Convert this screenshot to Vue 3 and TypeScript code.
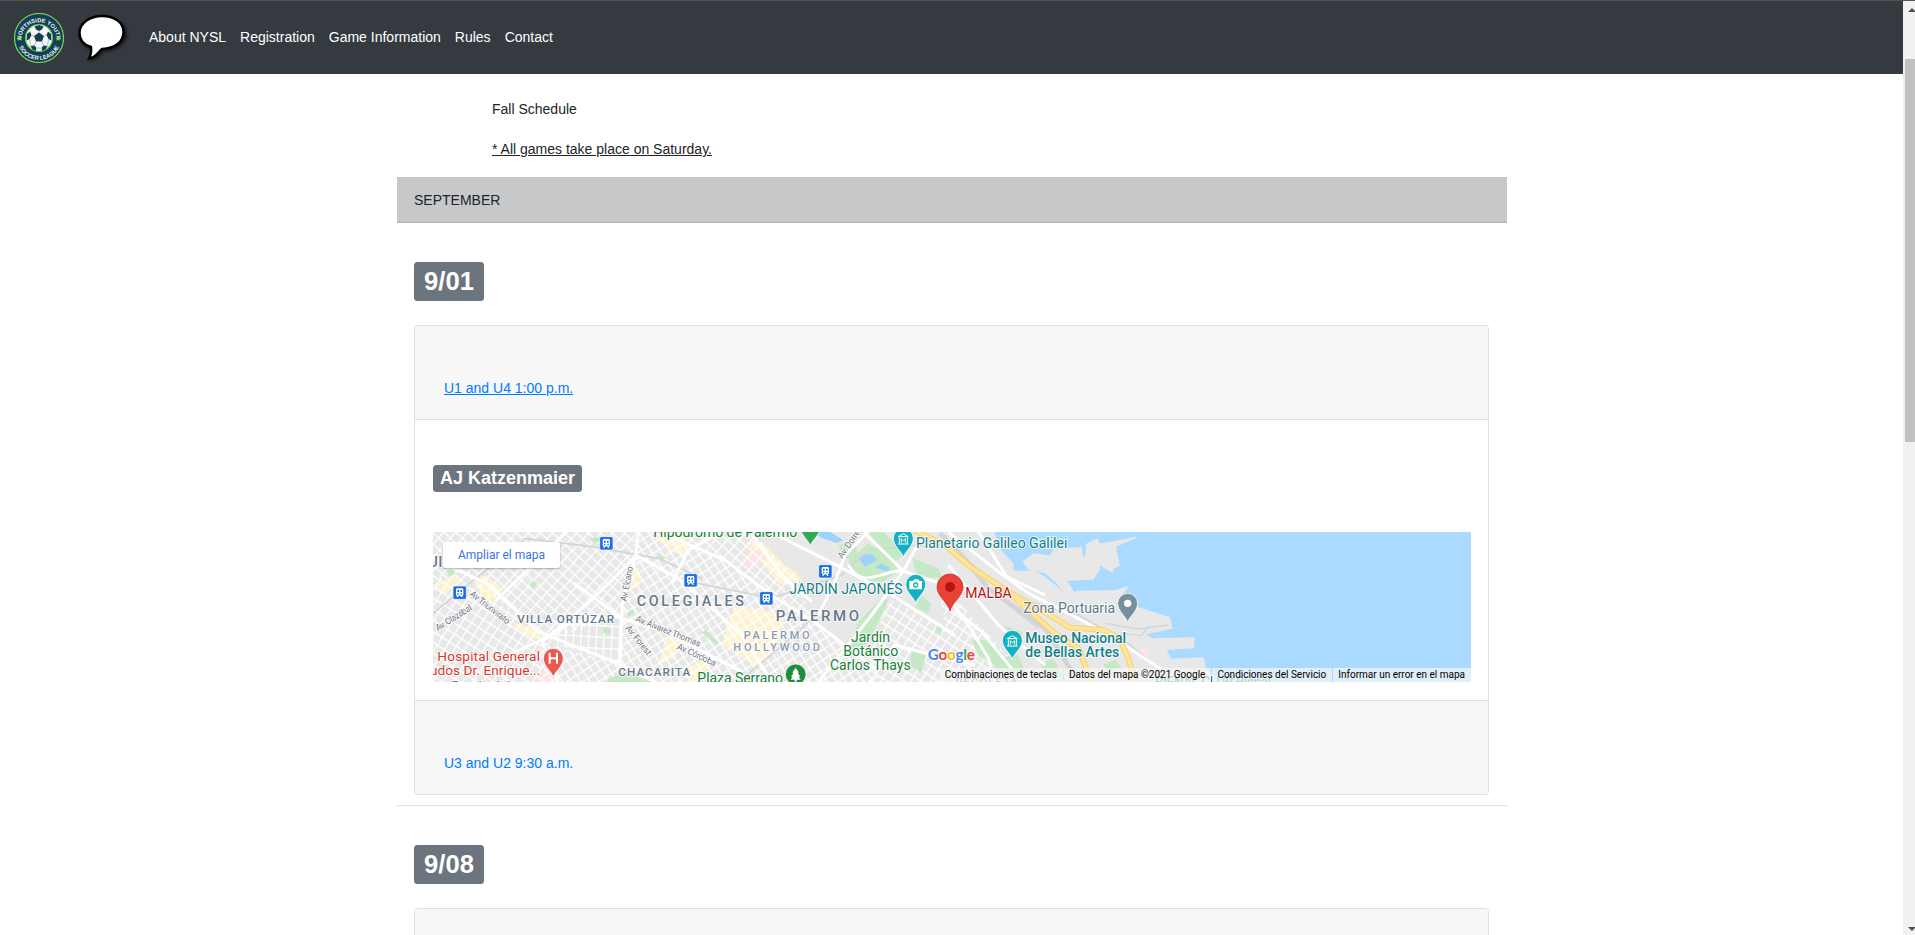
<script setup lang="ts">
interface Label {
  text: string
  x: number
  y: number
  size: number
  color: string
  width: number
  weight?: number
  rotate?: number
}
interface Pin {
  x: number
  y: number
  color: string
  kind: 'hospital' | 'plain' | 'museum' | 'camera' | 'dot' | 'main'
}

const navLinks: string[] = ['About NYSL', 'Registration', 'Game Information', 'Rules', 'Contact']
const attribution: string[] = [
  'Combinaciones de teclas',
  'Datos del mapa ©2021 Google',
  'Condiciones del Servicio',
  'Informar un error en el mapa',
]

const slate = '#66788a'
const street = '#6c7681'
const green = '#188038'
const teal = '#0f8089'
const red = '#d93a31'

// Map drawing units are thirds of a CSS pixel.
const labels: Label[] = [
  { text: 'UI', x: 10, y: 125, size: 44, color: slate, width: 42, weight: 500 },
  { text: 'Hipódromo de Palermo', x: 685, y: 35, size: 42, color: green, width: 432 },
  { text: 'Av Triunvirato', x: 133, y: 210, size: 27, color: street, width: 144, rotate: 38 },
  { text: 'Av. Olazábal', x: 38, y: 319, size: 27, color: street, width: 124, rotate: -32 },
  { text: 'Av. Elcano', x: 604, y: 230, size: 27, color: street, width: 106, rotate: -79 },
  { text: 'Av. Álvarez Thomas', x: 630, y: 288, size: 27, color: street, width: 208, rotate: 22 },
  { text: 'Av. Forest', x: 600, y: 310, size: 27, color: street, width: 106, rotate: 51 },
  { text: 'Av. Córdoba', x: 754, y: 371, size: 27, color: street, width: 126, rotate: 25 },
  { text: 'Av. Dorrego', x: 1252, y: 102, size: 27, color: street, width: 124, rotate: -56 },
  { text: 'Facultad de', x: 80, y: 491, size: 34, color: street, width: 195, weight: 500 },
  { text: 'VILLA ORTÚZAR', x: 277, y: 294, size: 35, color: slate, width: 290, weight: 500 },
  { text: 'COLEGIALES', x: 635, y: 243, size: 43, color: slate, width: 322, weight: 500 },
  { text: 'CHACARITA', x: 580, y: 453, size: 35, color: slate, width: 216, weight: 500 },
  { text: 'PALERMO', x: 1052, y: 288, size: 45, color: slate, width: 250, weight: 500 },
  { text: 'PALERMO', x: 956, y: 342, size: 33, color: '#8a9ab3', width: 198, weight: 500 },
  { text: 'HOLLYWOOD', x: 925, y: 378, size: 33, color: '#8a9ab3', width: 260, weight: 500 },
  { text: 'Hospital General', x: 37, y: 408, size: 41, color: red, width: 308 },
  { text: 'udos Dr. Enrique...', x: 15, y: 450, size: 41, color: red, width: 331 },
  { text: 'JARDÍN JAPONÉS', x: 1093, y: 206, size: 42, color: teal, width: 340 },
  { text: 'Jardín', x: 1278, y: 350, size: 42, color: green, width: 117 },
  { text: 'Botánico', x: 1255, y: 392, size: 42, color: green, width: 165 },
  { text: 'Carlos Thays', x: 1215, y: 434, size: 42, color: green, width: 242 },
  { text: 'Plaza Serrano', x: 817, y: 475, size: 42, color: green, width: 257 },
  { text: 'Planetario Galileo Galilei', x: 1473, y: 69, size: 42, color: teal, width: 454 },
  { text: 'MALBA', x: 1621, y: 219, size: 42, color: '#b31412', width: 139 },
  { text: 'Zona Portuaria', x: 1795, y: 264, size: 42, color: '#5d7988', width: 275 },
  { text: 'Museo Nacional', x: 1801, y: 354, size: 42, color: teal, width: 302, weight: 500 },
  { text: 'de Bellas Artes', x: 1801, y: 396, size: 42, color: teal, width: 282, weight: 500 },
  { text: 'RECOLETA', x: 1591, y: 483, size: 35, color: slate, width: 188, weight: 500 },
  { text: 'BIENAL CLUB Bienal', x: 2190, y: 487, size: 42, color: teal, width: 348, weight: 500 },
]

const stations: [number, number][] = [[104, 203], [544, 55], [797, 166], [1201, 139], [1024, 220]]

const pins: Pin[] = [
  { x: 385, y: 457, color: '#e8594f', kind: 'hospital' },
  { x: 1156, y: 63, color: '#34a853', kind: 'plain' },
  { x: 1435, y: 97, color: '#12b1c4', kind: 'museum' },
  { x: 1762, y: 403, color: '#12b1c4', kind: 'museum' },
  { x: 1472, y: 235, color: '#12b1c4', kind: 'camera' },
  { x: 2108, y: 292, color: '#78909c', kind: 'dot' },
  { x: 1575, y: 258, color: '#ea4335', kind: 'main' },
]

const parks: string[] = [
  '65,135 85,132 90,148 72,153', '313,180 325,166 337,178 325,190', '535,308 556,308 556,325 535,325',
  '605,265 622,253 628,262 610,278', '695,93 705,86 722,98 712,106', '550,462 600,440 680,471 545,471', '495,40 520,35 523,48 508,55',
  '830,322 842,315 880,352 872,359', '1240,62 1290,40 1300,110 1260,100',
  '1270,110 1330,55 1395,100 1420,138 1375,170 1310,165', '1330,21 1375,21 1440,85 1412,110 1370,75',
  '1375,215 1390,228 1350,310 1320,360 1275,370 1300,290',
  '1462,100 1540,130 1555,160 1510,160 1475,150', '1490,210 1518,238 1510,262 1470,250',
  '1460,370 1505,380 1490,445 1455,420', '1535,300 1550,306 1548,330 1532,322',
  '1640,345 1695,345 1740,395 1720,425 1660,390', '1700,400 1780,390 1800,440 1720,450',
  '1845,415 1885,402 1920,460 1865,455', '2035,418 2070,405 2090,430 2050,440', '1735,300 1792,322 1790,340 1745,325',
]
const blocks: string[] = [
  '150,180 180,150 232,190 195,240', '25,180 95,150 110,170 60,210', '600,160 640,125 650,170 595,215',
  '690,40 760,21 795,60 770,95', '725,335 780,345 745,400 700,420', '930,240 1080,270 1060,350 1000,430 890,360',
  '965,55 1010,50 1100,120 1130,165 1065,180', '770,440 840,400 855,430 800,471', '255,290 345,315 350,345 300,330',
]
const roads: string[] = [
  'M640 20L632 95L592 235L584 440', 'M632 95L500 225L350 352', 'M20 100L185 175L340 320L590 420L700 475',
  'M445 172L590 280L720 320L950 440', 'M350 345L400 471', 'M250 390L350 345L440 290L590 275', 'M635 92L760 160L950 330L1040 471',
  'M700 20L900 105L1045 215L1160 285L1350 430', 'M1035 20L1225 115L1400 210L1590 330', 'M975 20L1070 150L1160 230',
  'M1315 20L1435 138L1560 180', 'M1500 20L1435 138L1340 270L1230 410L1180 471', 'M1560 205L1630 300L1690 400L1710 471',
  'M1590 255L1670 320L1760 430', 'M1180 270L1230 170L1260 90L1330 20', 'M1270 120C1310 200 1380 130 1435 138',
  'M1570 120L1720 300L1860 420', 'M1570 22L1720 140L1810 205L1950 275L2060 335L2220 440', 'M1660 20L1745 155L1860 210',
  'M1350 430L1410 360L1520 390L1650 420', 'M890 20L790 75L740 175', 'M425 20L210 230',
]
</script>

<template>
  <div class="viewport">
    <div class="page">
      <header class="navbar">
        <svg class="logo" viewBox="0 0 100 100">
          <defs>
            <path id="arc-top" d="M14.500 54A35.500 35.500 0 1 1 85.500 54" />
            <path id="arc-bottom" d="M6 50A44 44 0 0 0 94 50" />
          </defs>
          <circle cx="50" cy="50" r="49" fill="#153f58" stroke="#78d64b" stroke-width="2.400" />
          <text class="crest"><textPath href="#arc-top" startOffset="50%" text-anchor="middle">NORTHSIDE YOUTH</textPath></text>
          <text class="crest"><textPath href="#arc-bottom" startOffset="50%" text-anchor="middle">SOCCER LEAGUE</textPath></text>
          <path fill="#8be33f" d="M12 45l1.500 4 4 .2-3.200 2.500 1.200 4-3.500-2.300-3.500 2.300 1.200-4-3.200-2.500 4-.2zM88 45l1.500 4 4 .2-3.200 2.500 1.200 4-3.500-2.300-3.500 2.300 1.200-4-3.200-2.500 4-.2z" />
          <circle cx="50" cy="50" r="27" fill="#f4f7f8" stroke="#67c94a" stroke-width="2.400" />
          <path fill="#183c50" d="M50 39l10 7-4 11H44l-4-11zM50 24l9 3-3 6-6 3-6-3-3-6zM26 42l6-5 3 7-4 8-6 3zM74 42l-6-5-3 7 4 8 6 3zM33 66l8-1 4 5-2 6-6-3zM67 66l-8-1-4 5 2 6 6-3z" />
          <path stroke="#8a9da8" stroke-width="1.300" fill="none" d="M50 36v3M35 44l5 2M65 44l-5 2M44 57l-3 8M56 57l3 8M45 70h10M31 52l2 14M69 52l-2 14" />
        </svg>
        <svg class="bubble" viewBox="0 0 54 54">
          <path class="bubble-shadow" d="M27 5.500C40 5.500 49 13 49 22C49 32 40 38.500 27 39C23 42 21 48 13 48C15 44 15 41 15 37C8 35 4 30 4 23C4 13 14 6 27 5.500Z" />
          <path fill="#fff" stroke="#000" stroke-width="2.400" d="M26 5C39 5 47.500 12 47.500 21C47.500 31 39 37.500 26 38C22 41 20 47 13 47.500C15 44 15.500 40 15 36C8 34 3.500 29 3.500 22C3.500 12 14 5 26 5Z" />
        </svg>
        <nav class="links">
          <a v-for="link in navLinks" :key="link">{{ link }}</a>
        </nav>
      </header>

      <main class="container">
        <div class="intro">
          <p>Fall Schedule</p>
          <p><u>* All games take place on Saturday.</u></p>
        </div>
        <div class="month">SEPTEMBER</div>

        <section class="day">
          <h2><span class="badge date">9/01</span></h2>
          <div class="card">
            <div class="card-header"><a class="game hovered">U1 and U4 1:00 p.m.</a></div>
            <div class="card-body">
              <h4><span class="badge venue">AJ Katzenmaier</span></h4>
              <div class="map">
                <svg class="map-art" viewBox="24 21 3114 450">
                  <defs>
                    <pattern id="grid-a" width="27" height="24" patternUnits="userSpaceOnUse" patternTransform="rotate(42)">
                      <path d="M0 0H27M0 0V24" class="lane" />
                    </pattern>
                    <pattern id="grid-b" width="23" height="34" patternUnits="userSpaceOnUse" patternTransform="rotate(3)">
                      <path d="M0 0H23M0 0V34" class="lane" />
                    </pattern>
                    <pattern id="grid-c" width="26" height="23" patternUnits="userSpaceOnUse" patternTransform="rotate(57)">
                      <path d="M0 0H26M0 0V23" class="lane" />
                    </pattern>
                    <pattern id="grid-d" width="25" height="28" patternUnits="userSpaceOnUse" patternTransform="rotate(33)">
                      <path d="M0 0H25M0 0V28" class="lane" />
                    </pattern>
                  </defs>
                  <rect x="24" y="21" width="3114" height="450" fill="#aadaff" />
                  <g fill="#e8e8e8" transform="translate(1695 15)">
                    <path d="M-1700 0H10L35 62L70 100L72 122L135 122L160 137L205 172L226 195L262 182L375 180L418 168L388 205L380 225L440 230L540 262L548 296L470 312L486 325L615 322L612 355L530 360L544 386L640 382L650 420L700 460H-1700Z" />
                    <path d="M97 95L130 70L180 76L190 58L276 50L279 80L326 74L330 118L310 149L232 152L252 185L226 196L200 160L165 130L115 120Z" />
                    <path d="M287 42L322 25L330 41L438 20L440 23L378 50L390 108L371 116L368 128L287 83Z" />
                  </g>
                  <polygon v-for="b in blocks" :key="b" :points="b" fill="#fef3cf" />
                  <path fill="#fce4e3" d="M950 105l35-35 40 22-40 45zM345 445l40-25 10 51h-60zM1510 335l18-2 2 20-16 4zM2130 378l30-12 12 28-30 10z" />
                  <path fill="url(#grid-a)" d="M24 21H632L590 270L350 350L190 200L24 150Z" />
                  <path fill="url(#grid-d)" d="M24 150L190 200L350 350V471H24Z" />
                  <path fill="url(#grid-b)" d="M350 350L440 280L585 270V420L400 360Z" />
                  <path fill="url(#grid-c)" d="M632 21H700L900 105L1180 290L1350 430L1370 471H350V350L590 420V270Z" />
                  <path fill="url(#grid-a)" d="M700 21H1000L1100 120L1160 280L900 105Z" />
                  <path fill="url(#grid-d)" d="M1390 220L1590 320L1720 430V471H1330V400ZM1540 180L1610 240L1800 450L1720 471L1560 300Z" />
                  <polygon v-for="p in parks" :key="p" :points="p" fill="#c5e8c5" />
                  <path fill="#e8e8e8" d="M980 21h45l170 90-30 65-85-55z" />
                  <path fill="#9cd2fb" d="M1300 100q20-18 45-10l10 15q-25 15-35 20zM1352 128l14-12 28 12-5 12zM1165 21h50l40 25-20 8-45-15z" />
                  <g fill="none" stroke="#d2d5d8" stroke-width="5">
                    <path d="M24 265L300 40L500 65L700 100L830 160M795 170L1040 220L1250 150L1330 75L1480 60L1590 75L1700 200L1840 310M940 471L1110 330L1190 250M1560 40L1740 210L1960 270L2110 355L2200 430" />
                    <path stroke-width="14" d="M1545 25L1600 80L1690 190L1860 310L1960 470" />
                    <path stroke-width="4" d="M2040 295L2140 312L2230 300M2085 325L2150 332L2170 305" />
                  </g>
                  <path v-for="r in roads" :key="r" :d="r" class="road" />
                  <g class="highway-edge">
                    <path d="M1465 15L1560 60L1635 125L1735 190L1810 255L1890 325L1960 370L2000 471" />
                    <path d="M1740 195L1840 250L1935 308L2035 315L2085 340L2110 400L2130 471" />
                  </g>
                  <g class="highway">
                    <path d="M1465 15L1560 60L1635 125L1735 190L1810 255L1890 325L1960 370L2000 471" />
                    <path d="M1740 195L1840 250L1935 308L2035 315L2085 340L2110 400L2130 471" />
                  </g>

                  <text
                    v-for="l in labels"
                    :key="l.text + l.y"
                    :x="l.x"
                    :y="l.y"
                    :fill="l.color"
                    :font-size="l.size"
                    :font-weight="l.weight ?? 400"
                    :textLength="l.width"
                    :transform="l.rotate ? `rotate(${l.rotate} ${l.x} ${l.y})` : undefined"
                    class="label"
                  >{{ l.text }}</text>

                  <g v-for="s in stations" :key="s[0]" :transform="`translate(${s[0]} ${s[1]})`">
                    <rect x="-20" y="-20" width="40" height="40" rx="5" fill="#1a6fe0" stroke="#fff" stroke-width="2" />
                    <path fill="#fff" fill-rule="evenodd" d="M-11-9q0-4 4-4H7q4 0 4 4V6q0 3-4 3l3 4H5L2 9h-4l-3 4h-5l3-4q-4 0-4-3zM-7-8v6h5v-6zM2-8v6h5v-6zM-7 2v4h4V2zM3 2v4h4V2z" />
                  </g>

                  <g transform="translate(1112 448)">
                    <circle r="31" fill="#1e8e3e" stroke="#fff" stroke-width="2" />
                    <path fill="#fff" d="M0-20L10-5H6L14 7H9L15 16H3v6h-6v-6h-12l6-9h-5l8-12h-4z" />
                  </g>

                  <g v-for="p in pins" :key="`${p.x}-${p.y}`" :transform="`translate(${p.x} ${p.y})`">
                    <template v-if="p.kind === 'main'">
                      <path :fill="p.color" stroke="#c5221f" stroke-width="2" d="M0 0C-5-24-39-45-39-72A39 39 0 0 1 39-72C39-45 5-24 0 0Z" />
                      <circle cy="-72" r="15" fill="#b31412" />
                    </template>
                    <template v-else>
                      <path :fill="p.color" stroke="#fff" stroke-width="2.500" d="M0 0C-5-18-30-33-30-57A30 30 0 0 1 30-57C30-33 5-18 0 0Z" />
                      <path v-if="p.kind === 'hospital'" class="glyph-line" stroke-width="6" d="M-11-74v33M11-74v33M-11-57h22" />
                      <circle v-if="p.kind === 'dot'" cy="-57" r="11" fill="#fff" />
                      <g v-if="p.kind === 'museum'" class="glyph-line" stroke-width="3">
                        <path d="M-15-62L0-71L15-62ZM-12-60v19M12-60v19M-16-40h32M-6-44v-12l6 6 6-6v12" />
                      </g>
                      <g v-if="p.kind === 'camera'">
                        <path fill="#fff" d="M-19-67h11l4-5H8l4 5h7v25h-38z" />
                        <circle cy="-55" r="8" :fill="p.color" />
                        <circle cy="-55" r="4" fill="#fff" />
                      </g>
                    </template>
                  </g>

                  <text x="1508" y="406" font-size="46" textLength="142" class="label brand">
                    <tspan fill="#4285f4">G</tspan><tspan fill="#ea4335">o</tspan><tspan fill="#fbbc04">o</tspan><tspan fill="#4285f4">g</tspan><tspan fill="#34a853">l</tspan><tspan fill="#ea4335">e</tspan>
                  </text>
                </svg>
                <a class="enlarge">Ampliar el mapa</a>
                <div class="attribution">
                  <span v-for="a in attribution" :key="a">{{ a }}</span>
                </div>
              </div>
            </div>
            <div class="card-header last"><a class="game">U3 and U2 9:30 a.m.</a></div>
          </div>
        </section>

        <section class="day">
          <h2><span class="badge date">9/08</span></h2>
          <div class="card">
            <div class="card-header"></div>
          </div>
        </section>
      </main>
    </div>
    <div class="scrollbar">
      <i class="arrow up"></i>
      <i class="thumb"></i>
      <i class="arrow down"></i>
    </div>
  </div>
</template>

<style>
html,
body {
  overflow: hidden;
}
</style>

<style scoped>
* {
  box-sizing: border-box;
}
.viewport {
  display: flex;
  height: 935px;
  overflow: hidden;
  background: #fff;
  border-top: 1px solid #54544f;
  color: #212529;
  font: 14px/21px "Liberation Sans", Arial, sans-serif;
}
.page {
  flex: 1;
  min-width: 0;
}
.navbar {
  display: flex;
  align-items: center;
  height: 73px;
  padding-left: 14px;
  background: #343a40;
}
.logo {
  width: 50px;
  height: 50px;
}
.crest {
  fill: #eef4f6;
  font: bold 11.5px "Liberation Sans", Arial, sans-serif;
}
.bubble {
  width: 54px;
  height: 54px;
  margin: 0 0 0 12px;
  overflow: visible;
}
.bubble-shadow {
  fill: #000;
  stroke: #000;
  stroke-width: 2;
  opacity: 0.55;
  filter: blur(1.5px);
  transform: translate(1px, 1px);
}
.links {
  display: flex;
  gap: 14px;
  margin-left: 19px;
  color: #fff;
}
.container {
  margin: 0 396px 0 397px;
}
.intro {
  padding: 25px 0 0 95px;
}
.intro p {
  margin: 0 0 19px;
}
.intro p:last-child {
  margin-bottom: 17px;
}
.month {
  height: 46px;
  padding: 13px 17px 0;
  background: #c6c8ca;
  border-bottom: 1px solid #abadaf;
}
.day {
  padding: 39px 18px 10px 17px;
  border-bottom: 1px solid #dee2e6;
}
h2,
h4 {
  display: flex;
  margin: 0;
}
.badge {
  border-radius: 3.500px;
  background: #6c757d;
  color: #fff;
  font-weight: 700;
}
.date {
  width: 70px;
  height: 39px;
  margin-bottom: 24px;
  font-size: 25.6px;
  line-height: 39px;
  text-align: center;
}
.card {
  border: 1px solid #dfdfdf;
  border-radius: 3.500px;
  overflow: hidden;
}
.card-header {
  height: 94px;
  padding: 52px 29px 0;
  background: #f7f7f7;
  border-bottom: 1px solid #dfdfdf;
}
.card-header.last {
  border-top: 1px solid #dfdfdf;
  border-bottom: 0;
}
.game {
  color: #007bff;
}
.hovered {
  text-decoration: underline;
}
.card-body {
  height: 280px;
  padding: 45px 17px 0 18px;
}
.venue {
  height: 27px;
  margin-bottom: 40px;
  padding: 0 7px;
  font-size: 18px;
  line-height: 26px;
}
.map {
  position: relative;
  height: 150px;
  overflow: hidden;
  font-family: Roboto, "Liberation Sans", sans-serif;
}
.map-art {
  display: block;
  width: 100%;
  height: 150px;
}
.lane {
  fill: none;
  stroke: #fff;
  stroke-width: 8;
}
.road {
  fill: none;
  stroke: #fff;
  stroke-width: 9;
  stroke-linejoin: round;
}
.highway-edge,
.highway {
  fill: none;
  stroke: #f9d26a;
  stroke-width: 17;
  stroke-linejoin: round;
}
.highway {
  stroke: #ffe59b;
  stroke-width: 11;
}
.label {
  stroke: #fff;
  stroke-width: 6;
  stroke-opacity: 0.8;
  stroke-linejoin: round;
  paint-order: stroke;
}
.brand {
  font-family: Lato, sans-serif;
  font-weight: 700;
}
.glyph-line {
  fill: none;
  stroke: #fff;
}
.enlarge {
  position: absolute;
  top: 10px;
  left: 10px;
  width: 117px;
  height: 26px;
  background: #fff;
  border-radius: 2px;
  box-shadow: 0 1px 2px rgb(0 0 0 / 30%);
  color: #3a74e8;
  font-size: 12px;
  line-height: 27px;
  text-align: center;
}
.attribution {
  position: absolute;
  right: 0;
  bottom: 0;
  display: flex;
  gap: 1px;
  height: 14px;
  color: #000;
  font-size: 10px;
  line-height: 14px;
  white-space: nowrap;
}
.attribution span {
  padding: 0 6px 0 5px;
  background: rgb(245 245 245 / 72%);
}
.scrollbar {
  display: flex;
  flex-direction: column;
  justify-content: space-between;
  width: 12px;
  background: #f1f1f1;
  padding: 7px 0 4px 2px;
}
.thumb {
  height: 383px;
  margin: 47px 0 auto;
  background: #c1c1c1;
}
.arrow {
  width: 0;
  margin-left: 3px;
  border: 4px solid transparent;
}
.up {
  border-top: 0;
  border-bottom-color: #505050;
}
.down {
  border-bottom: 0;
  border-top-color: #505050;
}
</style>
